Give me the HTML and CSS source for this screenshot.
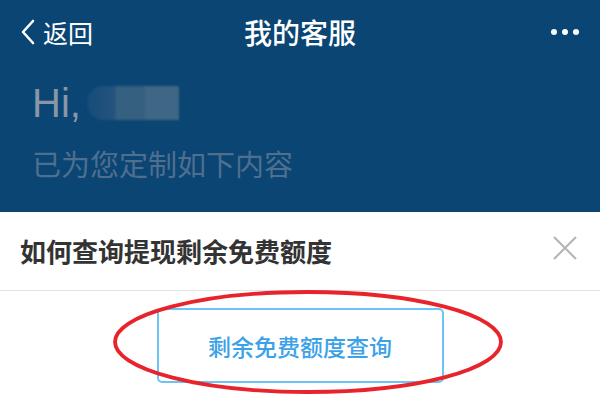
FILE: index.html
```html
<!DOCTYPE html>
<html lang="zh-CN">
<head>
    <meta charset="UTF-8">
    <title>我的客服</title>
    <link rel="stylesheet" href="styles.css">
</head>
<body>
    <div class="page">
        <header class="top">
            <nav class="nav">
                <a class="back" href="#">
                    <svg width="16" height="26" viewBox="0 0 16 26"><path d="M13 2 L3 13 L13 24" fill="none" stroke="#fff" stroke-width="2.6" stroke-linecap="round" stroke-linejoin="round"/></svg>
                    <span>返回</span>
                </a>
                <h1 class="nav-title">我的客服</h1>
                <div class="more"><i></i><i></i><i></i></div>
            </nav>
            <div class="greet">
                <div class="hi">Hi,<span class="name-blur"></span></div>
                <p class="sub">已为您定制如下内容</p>
            </div>
        </header>

        <div class="question">
            <span class="q-text">如何查询提现剩余免费额度</span>
            <svg class="close" width="26" height="26" viewBox="0 0 26 26"><path d="M2 2 L24 24 M24 2 L2 24" stroke="#b3b3b3" stroke-width="2"/></svg>
        </div>

        <div class="actions">
            <a class="query-btn" href="#">剩余免费额度查询</a>
        </div>

        <!-- 红色圈注 -->
        <svg class="circle-mark" width="600" height="403" viewBox="0 0 600 403">
            <ellipse cx="308" cy="342" rx="193" ry="50" fill="none" stroke="#e8232b" stroke-width="3.8"/>
        </svg>
    </div>
</body>
</html>
```

FILE: styles.css
```css
body {
    margin: 0;
    padding: 0;
    background: #fff;
    font-family: "Noto Sans CJK SC", "Liberation Sans", sans-serif;
}
.page {
    position: relative;
    width: 600px;
    height: 403px;
    overflow: hidden;
}
.top {
    background: #0a4574;
    height: 212px;
}
.nav {
    height: 64px;
    display: flex;
    align-items: center;
    justify-content: space-between;
    padding: 0 20px;
    position: relative;
}
.back {
    display: flex;
    align-items: center;
    gap: 7px;
    color: #fff;
    text-decoration: none;
    font-size: 25px;
    line-height: 30px;
}
.nav-title {
    position: absolute;
    left: 0;
    right: 0;
    margin: 0;
    text-align: center;
    color: #fff;
    font-size: 28px;
    font-weight: 500;
    line-height: 30px;
    pointer-events: none;
}
.more {
    display: flex;
    gap: 5px;
    padding-right: 1px;
}
.more i {
    width: 6px;
    height: 6px;
    border-radius: 50%;
    background: #fff;
}
.greet {
    padding: 19px 32px 0 32px;
}
.hi {
    font-family: "Liberation Sans", sans-serif;
    font-size: 40px;
    line-height: 40px;
    color: #8797a8;
    display: flex;
    align-items: center;
}
.name-blur {
    display: inline-block;
    width: 92px;
    height: 34px;
    margin-left: 6px;
    border-radius: 16px 0 0 16px;
    background: linear-gradient(90deg, #174c79 0%, #24537e 30%, #36607f 32%, #36607f 62%, #3f6684 64%, #3f6684 100%);
    filter: blur(1px);
}
.sub {
    margin: 22px 0 0 0;
    font-size: 29px;
    line-height: 36px;
    color: #4f6f8f;
}
.question {
    height: 78px;
    display: flex;
    align-items: center;
    justify-content: space-between;
    padding: 0 22px 0 20px;
    border-bottom: 1px solid #e3e3e3;
}
.q-text {
    font-size: 26px;
    font-weight: bold;
    color: #333;
    line-height: 32px;
}
.close {
    margin-top: -6px;
}
.actions {
    display: flex;
    justify-content: center;
    padding-top: 17px;
}
.query-btn {
    width: 283px;
    height: 71px;
    border: 2px solid #6cc3f7;
    border-radius: 5px;
    display: flex;
    align-items: center;
    justify-content: center;
    font-size: 23px;
    font-weight: 500;
    color: #3ba2e8;
    text-decoration: none;
}
.circle-mark {
    position: absolute;
    left: 0;
    top: 0;
    pointer-events: none;
}
```
